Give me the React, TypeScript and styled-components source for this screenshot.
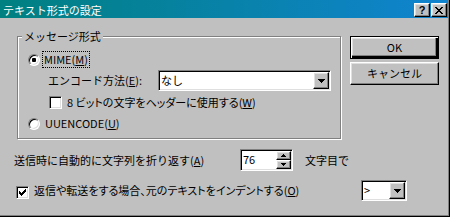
import styled, { createGlobalStyle, css } from 'styled-components';

const GlobalStyle = createGlobalStyle`
  html, body {
    margin: 0;
    padding: 0;
    background: #fff;
  }
`;

const raised = css`
  border: 1px solid;
  border-color: #fff #000 #000 #fff;
  box-shadow: inset -1px -1px #808080, inset 1px 1px #dfdfdf;
  background: #c0c0c0;
`;

const sunken = css`
  border: 1px solid;
  border-color: #808080 #fff #fff #808080;
  box-shadow: inset 1px 1px #000, inset -1px -1px #dfdfdf;
`;

const Window = styled.div`
  box-sizing: border-box;
  width: 450px;
  height: 217px;
  padding: 0 1px 2px 0;
  background: #c0c0c0;
  border-right: 1px solid #000;
  border-bottom: 1px solid #000;
  box-shadow: inset -1px -1px #808080;
  display: flex;
  flex-direction: column;
  overflow: hidden;
  font-family: 'Noto Sans CJK JP', 'Noto Sans', sans-serif;
  font-size: 11px;
  line-height: 13px;
  color: #000;
`;

const TitleBar = styled.div`
  height: 18px;
  margin-bottom: 1px;
  padding: 2px 1px 0 3px;
  box-sizing: border-box;
  display: flex;
  align-items: center;
  background: linear-gradient(90deg, #008080, #1084d0);
  color: #fff;
`;

const Title = styled.span`
  flex: 1;
`;

const CaptionButton = styled.span<{ $gap?: number }>`
  ${raised}
  box-sizing: border-box;
  width: 16px;
  height: 14px;
  margin-left: ${(p) => p.$gap ?? 0}px;
  display: flex;
  align-items: center;
  justify-content: center;
  color: #000;
  font-family: 'Liberation Sans', sans-serif;
  font-weight: bold;
  font-size: 11px;
  line-height: 12px;
`;

const Body = styled.div`
  display: flex;
  flex-direction: column;
`;

const TopRow = styled.div`
  display: flex;
  align-items: flex-start;
  padding-left: 17px;
`;

const GroupBox = styled.div`
  box-sizing: border-box;
  width: 324px;
  height: 103px;
  margin-top: 17px;
  padding-left: 10px;
  border: 1px solid #808080;
  box-shadow: inset 1px 1px #fff, 1px 1px #fff;
  display: flex;
  flex-direction: column;
`;

const Legend = styled.span`
  align-self: flex-start;
  height: 13px;
  margin: -7px 0 0 -6px;
  padding: 0 2px;
  background: #c0c0c0;
`;

const Row = styled.div<{ $top: number; $indent?: number; $height: number }>`
  display: flex;
  align-items: center;
  margin-top: ${(p) => p.$top}px;
  padding-left: ${(p) => p.$indent ?? 0}px;
  height: ${(p) => p.$height}px;
`;

const RadioCircle = styled.span<{ $checked?: boolean }>`
  ${sunken}
  box-sizing: border-box;
  width: 12px;
  height: 12px;
  border-radius: 50%;
  background: #fff;
  display: flex;
  align-items: center;
  justify-content: center;
  flex: none;

  &::after {
    content: '';
    display: ${(p) => (p.$checked ? 'block' : 'none')};
    width: 4px;
    height: 4px;
    border-radius: 1px;
    background: #000;
  }
`;

const Label = styled.span<{
  $gap?: number;
  $width?: number;
  $focus?: boolean;
  $tight?: boolean;
}>`
  margin-left: ${(p) => p.$gap ?? 0}px;
  width: ${(p) => (p.$width ? `${p.$width}px` : 'auto')};
  flex: none;
  white-space: nowrap;
  font-feature-settings: ${(p) => (p.$tight ? "'palt'" : 'normal')};
  ${(p) =>
    p.$focus &&
    css`
      outline: 1px dotted #000;
      padding: 1px 1px;
    `}
`;

const Key = styled.u`
  text-decoration: underline;
  text-underline-offset: 1px;
`;

const CheckBox = styled.span<{ $top?: number }>`
  ${sunken}
  box-sizing: border-box;
  width: 13px;
  height: 13px;
  margin-top: ${(p) => p.$top ?? 0}px;
  background: #fff;
  display: flex;
  align-items: center;
  justify-content: center;
  flex: none;
`;

const Combo = styled.div<{ $width: number; $gap?: number }>`
  ${sunken}
  box-sizing: border-box;
  width: ${(p) => p.$width}px;
  height: 21px;
  margin-left: ${(p) => p.$gap ?? 0}px;
  padding: 1px;
  background: #fff;
  display: flex;
  flex: none;
`;

const ComboText = styled.span`
  flex: 1;
  padding-left: 1px;
  line-height: 17px;
`;

const DropButton = styled.span`
  ${raised}
  box-sizing: border-box;
  width: 16px;
  height: 17px;
  display: flex;
  align-items: center;
  justify-content: center;
`;

const Spin = styled.div`
  ${sunken}
  box-sizing: border-box;
  width: 53px;
  height: 22px;
  padding: 1px;
  background: #fff;
  display: flex;
  flex: none;
`;

const SpinText = styled.span`
  flex: 1;
  padding-left: 1px;
  line-height: 16px;
`;

const SpinButtons = styled.span`
  display: flex;
  flex-direction: column;
  width: 15px;
`;

const SpinButton = styled.span`
  ${raised}
  box-sizing: border-box;
  height: 9px;
  display: flex;
  align-items: center;
  justify-content: center;
`;

const ButtonColumn = styled.div`
  display: flex;
  flex-direction: column;
  gap: 3px;
  margin: 17px 0 0 9px;
`;

const PushButton = styled.button<{ $default?: boolean }>`
  ${raised}
  box-sizing: border-box;
  width: 89px;
  height: 23px;
  padding: 0;
  font: inherit;
  color: #000;
  ${(p) =>
    p.$default &&
    css`
      border-color: #000;
      box-shadow: inset 1px 1px #fff, inset -2px -2px #000,
        inset -3px -3px #808080, inset 2px 2px #dfdfdf;
    `}
`;

const Check = () => (
  <svg width="7" height="7" viewBox="0 0 7 7" shapeRendering="crispEdges">
    <path d="M6 0h1v1h-1zM5 1h2v1h-2zM0 2h1v1h-1zM4 2h3v1h-3zM0 3h2v1h-2zM3 3h3v1h-3zM0 4h5v1h-5zM1 5h3v1h-3zM2 6h1v1h-1z" />
  </svg>
);

const DownArrow = () => (
  <svg width="7" height="4" viewBox="0 0 7 4" shapeRendering="crispEdges">
    <path d="M0 0h7v1h-7zM1 1h5v1h-5zM2 2h3v1h-3zM3 3h1v1h-1z" />
  </svg>
);

const SmallArrow = ({ up }: { up?: boolean }) => (
  <svg
    width="5"
    height="3"
    viewBox="0 0 5 3"
    shapeRendering="crispEdges"
    style={up ? { transform: 'scaleY(-1)' } : undefined}
  >
    <path d="M0 0h5v1h-5zM1 1h3v1h-3zM2 2h1v1h-1z" />
  </svg>
);

const CloseGlyph = () => (
  <svg width="8" height="7" viewBox="0 0 8 7" shapeRendering="crispEdges">
    <path d="M0 0h2v1h-2zM6 0h2v1h-2zM1 1h2v1h-2zM5 1h2v1h-2zM2 2h4v1h-4zM3 3h2v1h-2zM2 4h4v1h-4zM1 5h2v1h-2zM5 5h2v1h-2zM0 6h2v1h-2zM6 6h2v1h-2z" />
  </svg>
);

const App: React.FC = () => {
  return (
    <>
      <GlobalStyle />
      <Window>
        <TitleBar>
          <Title>テキスト形式の設定</Title>
          <CaptionButton>?</CaptionButton>
          <CaptionButton $gap={1}>
            <CloseGlyph />
          </CaptionButton>
        </TitleBar>

        <Body>
          <TopRow>
            <GroupBox>
              <Legend>メッセージ形式</Legend>

              <Row $top={9} $height={15}>
                <RadioCircle $checked />
                <Label $gap={3} $focus>
                  MIME(<Key>M</Key>)
                </Label>
              </Row>

              <Row $top={3} $indent={20} $height={21}>
                <Label $width={110}>
                  エンコード方法(<Key>E</Key>):
                </Label>
                <Combo $width={173}>
                  <ComboText>なし</ComboText>
                  <DropButton>
                    <DownArrow />
                  </DropButton>
                </Combo>
              </Row>

              <Row $top={5} $indent={21} $height={13}>
                <CheckBox />
                <Label $gap={5} $tight>
                  8 ビットの文字をヘッダーに使用する(<Key>W</Key>)
                </Label>
              </Row>

              <Row $top={8} $height={13}>
                <RadioCircle />
                <Label $gap={5}>
                  UUENCODE(<Key>U</Key>)
                </Label>
              </Row>
            </GroupBox>

            <ButtonColumn>
              <PushButton $default>OK</PushButton>
              <PushButton>キャンセル</PushButton>
            </ButtonColumn>
          </TopRow>

          <Row $top={10} $indent={14} $height={22}>
            <Label $width={226}>
              送信時に自動的に文字列を折り返す(<Key>A</Key>)
            </Label>
            <Spin>
              <SpinText>76</SpinText>
              <SpinButtons>
                <SpinButton>
                  <SmallArrow up />
                </SpinButton>
                <SpinButton>
                  <SmallArrow />
                </SpinButton>
              </SpinButtons>
            </Spin>
            <Label $gap={12}>文字目で</Label>
          </Row>

          <Row $top={9} $indent={16} $height={21}>
            <CheckBox $top={4}>
              <Check />
            </CheckBox>
            <Label $gap={5} $width={327} $tight>
              返信や転送をする場合、元のテキストをインデントする(<Key>O</Key>)
            </Label>
            <Combo $width={46}>
              <ComboText>&gt;</ComboText>
              <DropButton>
                <DownArrow />
              </DropButton>
            </Combo>
          </Row>
        </Body>
      </Window>
    </>
  );
};

export default App;
